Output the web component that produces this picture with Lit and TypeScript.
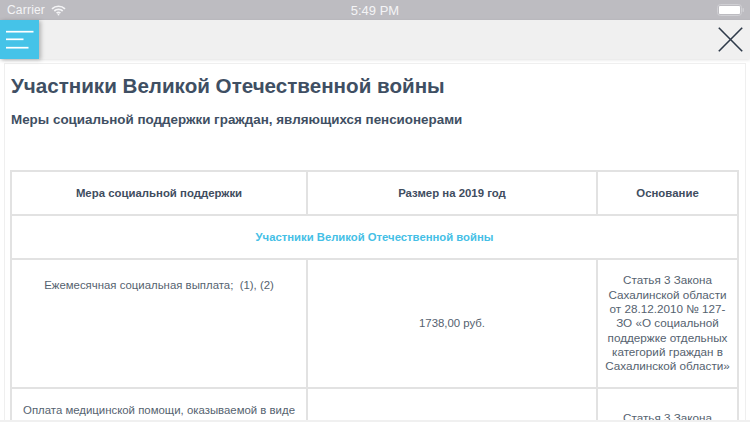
import { LitElement, html, css } from "lit";
import { customElement } from "lit/decorators.js";

@customElement("app-root")
export class AppRoot extends LitElement {
  static styles = css`
    :host { display: block; width: 750px; height: 422px; overflow: hidden; position: relative; background: #fff;
      font-family: "Liberation Sans", Arial, sans-serif; color: #3f4d5f; }
    .status { height: 20px; background: #bdbcc1; display: flex; align-items: center; color: #f4f4f6; font-size: 12px; padding: 0 6px 0 7px; position: relative; }
    .carrier { letter-spacing: 0.2px; }
    .wifi { margin-left: 6px; display: block; }
    .time { position: absolute; left: 0; right: 0; text-align: center; font-size: 13px; }
    .battery { margin-left: auto; display: block; }
    .bar { height: 39px; background: #f0f0f0; display: flex; justify-content: space-between; align-items: center; box-shadow: 0 1px 3px rgba(0,0,0,.12); position: relative; }
    .menu { width: 39px; height: 39px; background: #45c3e8; box-shadow: 2px 1px 4px rgba(0,0,0,.25); display: block; }
    .close { display: block; margin-right: 7px; }
    .page { padding: 4px 4px 0 4px; }
    .card { border: 1px solid #efefef; border-bottom: 0; padding: 0 6px; height: 400px; }
    h1 { margin: 0; padding-top: 8px; font-size: 20.6px; line-height: 27px; font-weight: 700; color: #3f4f63; }
    h2 { margin: 0; padding-top: 12px; font-size: 13.4px; line-height: 18px; font-weight: 700; color: #3f4f63; }
    table { margin: 41px 0 0 -1px; width: 729px; border-collapse: collapse; table-layout: fixed; font-size: 11.4px; line-height: 14.3px; text-align: center; color: #55626f; }
    td, th { border: 2px solid #e2e2e2; padding: 0 10px; }
    th { height: 41.5px; font-weight: 700; color: #3f4d5f; }
    .section { height: 41.5px; font-weight: 700; font-size: 11.3px; color: #45bfe6; padding-top: 1px; }
    .first { height: 129px; }
    .c1 { width: 296px; } .c2 { width: 290px; }
    .top-a { vertical-align: top; padding-top: 18px; }
    .top-b { vertical-align: top; padding-top: 14px; }
    .legal { font-size: 11.7px; padding: 0 5px; }
    .top-c { vertical-align: top; padding-top: 22px; }
    .foot { position: absolute; left: 0; right: 0; bottom: 0; height: 2px; background: #f0f0f0; }
  `;

  render() {
    return html`
      <div class="status">
        <span class="carrier">Carrier</span>
        <svg class="wifi" width="15" height="11" viewBox="0 0 15 11" fill="none" stroke="#f4f4f6" stroke-width="1.7">
          <path d="M1 3.8C4.6.4 10.4.4 14 3.8" />
          <path d="M3.3 6C5.6 3.9 9.4 3.9 11.7 6" />
          <path d="M5.6 8.2C6.6 7.3 8.4 7.3 9.4 8.2" />
          <circle cx="7.5" cy="9.6" r=".9" fill="#f4f4f6" stroke="none" />
        </svg>
        <span class="time">5:49 PM</span>
        <svg class="battery" width="27" height="12" viewBox="0 0 27 12">
          <rect x=".5" y=".5" width="24" height="11" rx="3" fill="none" stroke="#d0d0d4" />
          <rect x="2" y="2" width="21" height="8" rx="1" fill="#fff" />
          <rect x="25.5" y="4" width="1.5" height="4" rx=".7" fill="#d0d0d4" />
        </svg>
      </div>
      <div class="bar">
        <svg class="menu" viewBox="0 0 39 39" stroke="#fff" stroke-width="1.7" fill="none">
          <path d="M6 11.7H33.5" /><path d="M6 19.3H23.5" /><path d="M6 27.7H28.5" />
        </svg>
        <svg class="close" width="25" height="25" viewBox="0 0 25 25" stroke="#2e3a49" stroke-width="1.6" fill="none">
          <path d="M.8.8 24.2 24.2" /><path d="M24.2.8 .8 24.2" />
        </svg>
      </div>
      <div class="page">
        <div class="card">
          <h1>Участники Великой Отечественной войны</h1>
          <h2>Меры социальной поддержки граждан, являющихся пенсионерами</h2>
          <table>
            <colgroup><col class="c1" /><col class="c2" /><col /></colgroup>
            <tr><th>Мера социальной поддержки</th><th>Размер на 2019 год</th><th>Основание</th></tr>
            <tr><td class="section" colspan="3">Участники Великой Отечественной войны</td></tr>
            <tr class="first">
              <td class="top-a">Ежемесячная социальная выплата;&nbsp; (1), (2)</td>
              <td>1738,00 руб.</td>
              <td class="legal">Статья 3 Закона Сахалинской области от 28.12.2010 № 127-ЗО «О социальной поддержке отдельных категорий граждан в Сахалинской области»</td>
            </tr>
            <tr>
              <td class="top-b">Оплата медицинской помощи, оказываемой в виде</td>
              <td></td>
              <td class="legal top-c">Статья 3 Закона</td>
            </tr>
          </table>
        </div>
      </div>
      <div class="foot"></div>
    `;
  }
}
